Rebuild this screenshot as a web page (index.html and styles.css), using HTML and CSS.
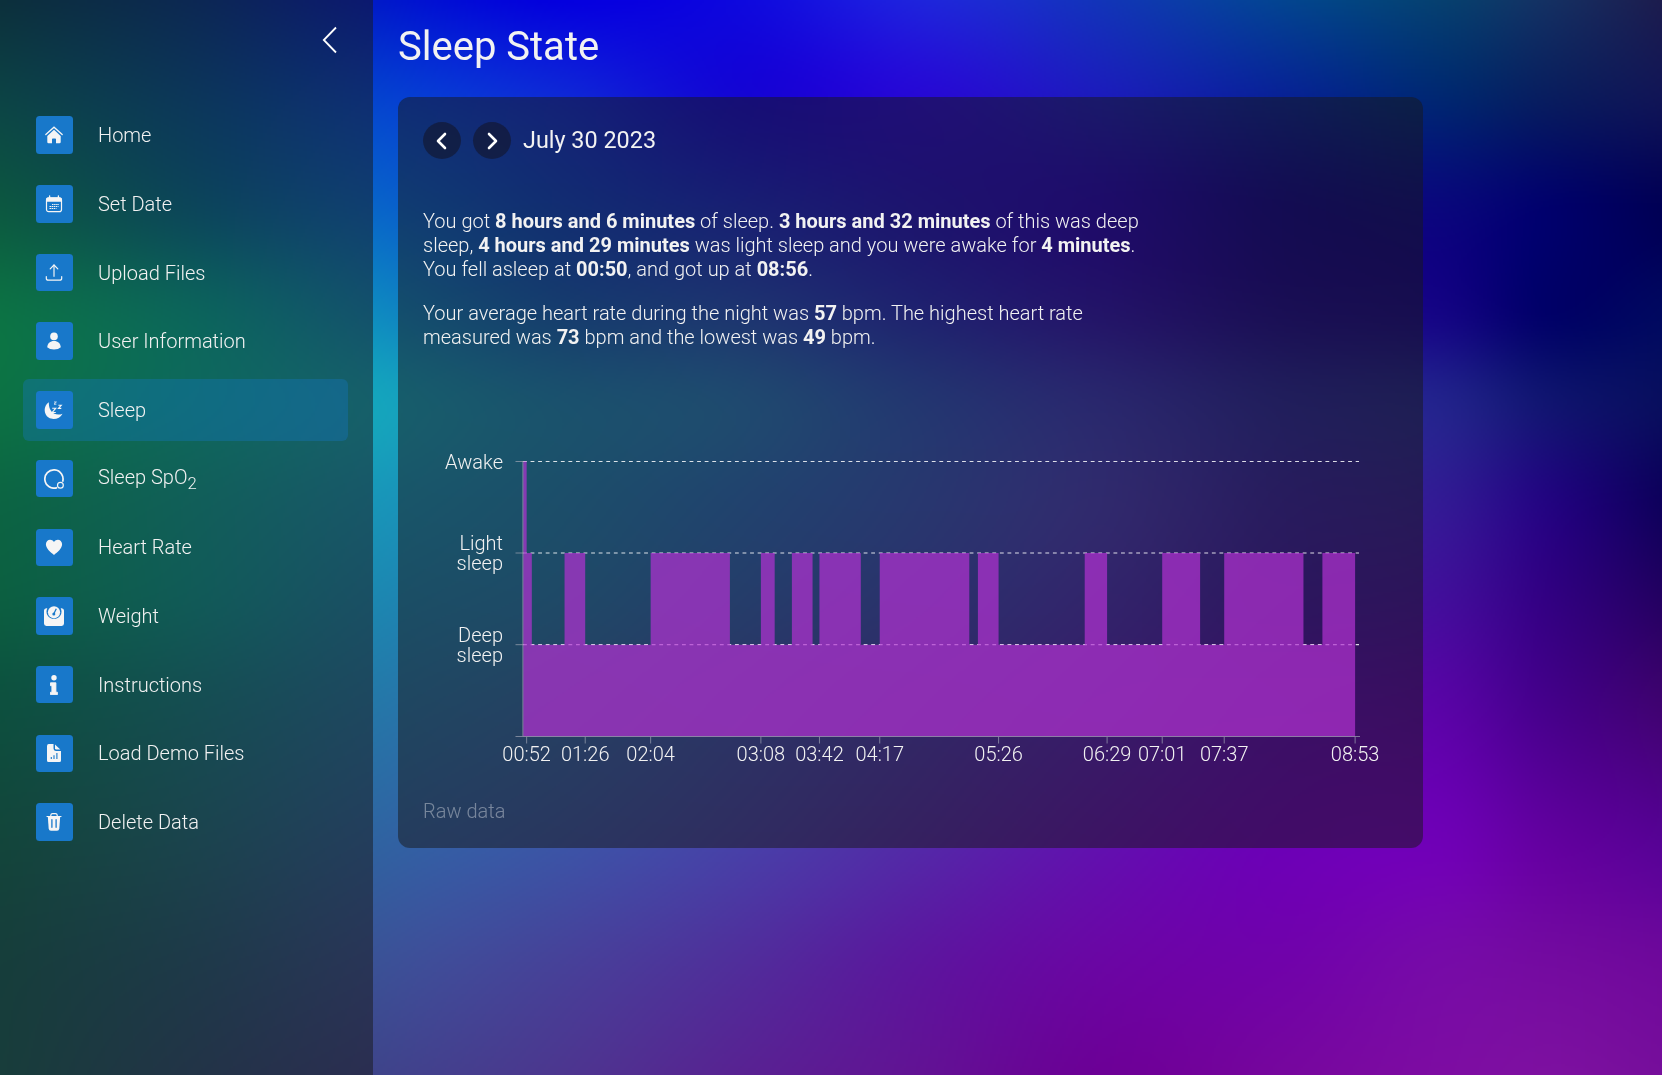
FILE: index.html
```html
<!DOCTYPE html>
<html lang="en">
<head>
<meta charset="utf-8">
<title>Sleep State</title>
<link rel="stylesheet" href="styles.css">
</head>
<body>
<canvas class="backdrop" width="832" height="538"></canvas>
<div class="app">
  <aside class="sidebar">
    <button class="collapse" aria-label="Collapse menu">
      <svg width="16" height="28" viewBox="0 0 16 28"><path d="M14 1.5 1.8 14 14 26.5" fill="none" stroke="#fff" stroke-width="1.8"/></svg>
    </button>
    <nav class="menu">
      <a class="item"><span class="icon"><svg viewBox="0 0 20 20"><path d="M1.8 9.6 10 2.2l8.2 7.4" fill="none" stroke="#f5f5f5" stroke-width="1.3" stroke-linecap="round"/><path d="M10 4.8 3.3 10.9V17q0 1.2 1.2 1.2H8v-4q0-.8.8-.8h2.4q.8 0 .8.8v4h3.500q1.200 0 1.200-1.200v-6.100z"/></svg></span><span>Home</span></a>
      <a class="item"><span class="icon"><svg viewBox="0 0 20 20"><path d="M5.600 1.800v3M14.400 1.800v3" stroke="#f5f5f5" stroke-width="1.300" stroke-linecap="round"/><rect x="2.500" y="3.900" width="15" height="13.700" rx="2.200" fill="none" stroke="#f5f5f5" stroke-width="1.200"/><path d="M2 7.800V6q0-2.400 2.400-2.400h11.200Q18 3.600 18 6v1.800z"/><path d="M8 10.500h7M5.500 12.500h9M5.500 14.500h7" stroke="#f5f5f5" stroke-width="1" stroke-dasharray="1.500 .6" fill="none"/></svg></span><span>Set Date</span></a>
      <a class="item"><span class="icon"><svg viewBox="0 0 20 20"><g fill="none" stroke="#f5f5f5" stroke-linecap="round" stroke-linejoin="round"><path d="M10 13.300V2.200" stroke-width="1.400" opacity=".85"/><path d="M6.200 5.800 10 2l3.800 3.800M2.300 13.500v1.700q0 2 2 2h11.400q2 0 2-2v-1.700" stroke-width="1.200"/></g></svg></span><span>Upload Files</span></a>
      <a class="item"><span class="icon"><svg viewBox="0 0 20 20"><circle cx="10" cy="5.400" r="3.800"/><path d="M3.200 16.300C3.500 12.300 6 10 10 10s6.500 2.300 6.800 6.300Q14.500 18.600 10 18.600T3.200 16.300z"/></svg></span><span>User Information</span></a>
      <a class="item active"><span class="icon"><svg viewBox="0 0 20 20"><path d="M4.900 2.200C-1 6-.4 14.500 4.600 17.600c4.800 3 11.500 1 13.900-3.900C10.500 16.800 4.200 10.800 4.900 2.200z"/><path d="M8.200 8.200h3.600l-3.600 4.300h3.600M14.400 5.200h2.900l-2.900 3.200h2.900" fill="none" stroke="#f5f5f5" stroke-width="1.100"/><path d="M10 2h2.400l-2.400 2.200h2.400" fill="none" stroke="#f5f5f5" stroke-width=".8"/></svg></span><span>Sleep</span></a>
      <a class="item"><span class="icon"><svg viewBox="0 0 20 20"><g fill="none" stroke="#f5f5f5" stroke-width="1.700"><path d="M18.600 12.800A9.100 9.100 0 1 0 13 18.600"/><circle cx="16.400" cy="16.200" r="2.900" stroke-width="1.200"/></g></svg></span><span class="raised">Sleep SpO<sub>2</sub></span></a>
      <a class="item"><span class="icon"><svg viewBox="0 0 20 20"><path d="M10 18C6.500 15 1.900 11.700 1.900 7.300 1.900 2.200 7.700 1.100 10 5c2.300-3.900 8.100-2.800 8.100 2.300C18.100 11.700 13.500 15 10 18z"/></svg></span><span>Heart Rate</span></a>
      <a class="item"><span class="icon"><svg viewBox="0 0 20 20"><path d="M2.300 2.200h1A7.500 7.500 0 1 0 16.700 2.200h1Q20 2.400 20 4.400v13.200Q20 20 17.600 20H2.400Q0 20 0 17.600V4.400Q0 2.400 2.300 2.200z"/><circle cx="10" cy="6.300" r="6.100"/><path d="M12.300 2.800 10.200 7" stroke="#1878ca" stroke-width="1.300"/><circle cx="9.800" cy="8" r="1.500" fill="#1878ca"/></svg></span><span>Weight</span></a>
      <a class="item"><span class="icon"><svg viewBox="0 0 20 20"><circle cx="10" cy="2.700" r="2.700"/><path d="M6.500 7.800h5.400v9.400h1.500v2.500H6.500v-2.500h1.400v-6.500H6.500z" stroke="#f5f5f5" stroke-width=".9" stroke-linejoin="round"/></svg></span><span>Instructions</span></a>
      <a class="item"><span class="icon"><svg viewBox="0 0 20 20"><path d="M4.800 1.100H9.500v4.500q0 2.300 2.300 2.300H17v9.500q0 1.500-1.500 1.500h-11Q3 18.900 3 17.400V2.900q0-1.800 1.800-1.800z"/><path d="M11 1.400 16.300 6.600H12.400Q11 6.600 11 5.200z"/><path d="M7.300 14v2M10 12.200V16M12.900 10v6" stroke="#1878ca" stroke-width="1.100"/></svg></span><span>Load Demo Files</span></a>
      <a class="item"><span class="icon"><svg viewBox="0 0 20 20"><path d="M6.800 4V3.200Q7 1.700 8.500 1.700h3Q13 1.700 13.200 3.200V4M3 4.500h14" fill="none" stroke="#f5f5f5" stroke-width="1.200" stroke-linecap="round"/><path d="M3.800 4.500h12.400l-.9 12q-.2 2.200-2.300 2.200H7q-2.100 0-2.300-2.200z"/><path d="M7.900 7.700v7.600M12.100 7.700v7.600" stroke="#1878ca" stroke-width="1.300" stroke-linecap="round"/></svg></span><span>Delete Data</span></a>
    </nav>
  </aside>
  <main class="content">
    <h1 class="title">Sleep State</h1>
    <section class="card">
      <header class="date-bar">
        <button class="round" aria-label="Previous day"><svg width="12" height="18" viewBox="0 0 12 18"><path d="M9 2 2 9l7 7"/></svg></button>
        <button class="round" aria-label="Next day"><svg width="12" height="18" viewBox="0 0 12 18"><path d="m3 2 7 7-7 7"/></svg></button>
        <h2 class="date">July 30 2023</h2>
      </header>
      <div class="summary">
        <p>You got <b>8 hours and 6 minutes</b> of sleep. <b>3 hours and 32 minutes</b> of this was deep<br>sleep, <b>4 hours and 29 minutes</b> was light sleep and you were awake for <b>4 minutes</b>.<br>You fell asleep at <b>00:50</b>, and got up at <b>08:56</b>.</p>
        <p>Your average heart rate during the night was <b>57</b> bpm. The highest heart rate<br>measured was <b>73</b> bpm and the lowest was <b>49</b> bpm.</p>
      </div>
      <svg class="chart" width="975" height="341" viewBox="0 0 975 341">
        <g class="grid"><path d="M100 24.500H936M100 116H936M100 207.700H936"/></g>
        <path class="area"/>
        <path class="axis" d="M92.500 24.500h7.500M92.500 116h7.500M92.500 207.700h7.500M92.500 299.500H937M99.900 24v275"/>
        <g class="ylabels"><text x="80" y="32">Awake</text><text x="80" y="113">Light</text><text x="80" y="133">sleep</text><text x="80" y="205">Deep</text><text x="80" y="225">sleep</text></g>
        <g class="xlabels"></g>
      </svg>
      <a class="raw">Raw data</a>
    </section>
  </main>
</div>
<script src="script.js"></script>
</body>
</html>
```
FILE: styles.css
```css
* { box-sizing: border-box; }
body {
  margin: 0;
  height: 100vh;
  overflow: hidden;
  background: #0a1470;
  color: #f2f2f2;
  font: 300 20px/24px Roboto, sans-serif;
}
button { border: 0; padding: 0; background: none; }
.backdrop { position: fixed; inset: 0; width: 100%; height: 100%; z-index: -1; }
.app { display: flex; height: 100vh; }
.sidebar {
  width: 373px;
  flex: none;
  padding: 26px 25px 0 23px;
  background: rgba(23, 23, 24, .5);
}
.collapse { display: block; width: 16px; height: 28px; margin: 0 10px 50.300px auto; }
.collapse svg { display: block; }
.menu { display: flex; flex-direction: column; gap: 7px; }
.item {
  display: flex;
  flex: none;
  align-items: center;
  gap: 25px;
  height: 61.690px;
  padding-left: 13px;
  border-radius: 6px;
}
.item.active { background: rgba(24, 120, 202, .34); }
.icon {
  display: grid;
  place-items: center start;
  width: 37px;
  height: 37.500px;
  padding-left: 8px;
  border-radius: 3.500px;
  background: #1878ca;
}
.icon svg { width: 20px; height: 20px; fill: #f5f5f5; }
.raised { padding-bottom: 3px; }
sub { font-size: 16.700px; line-height: 0; }
.content { flex: 1; padding: 23px 25px; }
.title { margin: 0; font-size: 40px; line-height: 48px; font-weight: 400; }
.card {
  width: 1025px;
  height: 751px;
  margin-top: 26px;
  padding: 25px;
  border-radius: 12px;
  background: rgba(23, 23, 24, .5);
}
.date-bar { display: flex; align-items: center; gap: 12px; height: 37px; }
.round {
  display: grid;
  place-items: center;
  width: 38px;
  height: 37px;
  border-radius: 50%;
  background: rgba(20, 22, 42, .6);
}
.round svg { fill: none; stroke: #fff; stroke-width: 2.600; stroke-linecap: round; stroke-linejoin: round; }
.date { margin: 0; padding-bottom: 2px; font-size: 23.400px; font-weight: 400; }
.summary { margin-top: 50px; }
.summary p { margin: 0 0 20px; }
.summary b { font-weight: 700; }
.chart { display: block; margin-top: 88px; overflow: visible; }
.grid path { stroke: rgba(255, 255, 255, .85); stroke-width: 1.200; stroke-dasharray: 3.830 3.740; }
.axis { fill: none; stroke: rgba(160, 165, 180, .7); }
.area { fill: rgba(176, 50, 208, .72); }
.chart text { fill: #f2f2f2; font-size: 20px; }
.ylabels { text-anchor: end; }
.xlabels { text-anchor: middle; }
.raw { display: block; margin-top: 21px; color: rgba(255, 255, 255, .38); }
```
FILE: script.js
```js
// Mesh gradient behind the page: colours at the crossings of the xs and ys lines.
const xs = [0, 190, 373, 560, 740, 920, 1100, 1280, 1440, 1550, 1662];
const ys = [0, 100, 210, 310, 400, 500, 600, 700, 850, 960, 1075];
const mesh = [
  [[0,72,96],[0,56,142],[0,26,200],[4,0,222],[14,8,222],[30,36,220],[18,52,185],[3,68,145],[6,64,112],[20,48,98],[28,28,78]],
  [[0,112,114],[0,86,156],[4,68,206],[14,42,214],[20,6,212],[38,8,212],[28,26,188],[8,32,150],[0,38,114],[8,28,95],[16,20,86]],
  [[0,154,106],[0,118,156],[8,102,200],[12,68,203],[24,40,205],[34,16,196],[36,0,186],[16,0,142],[10,6,125],[0,0,108],[0,0,85]],
  [[0,204,112],[0,176,158],[14,138,192],[20,98,196],[34,80,200],[38,44,198],[46,16,184],[28,6,146],[20,4,132],[0,0,104],[0,8,95]],
  [[0,204,112],[4,184,160],[20,165,188],[28,138,194],[38,122,198],[46,84,200],[58,54,194],[42,36,160],[34,34,140],[16,20,112],[8,14,94]],
  [[0,178,110],[10,166,154],[24,150,184],[32,132,188],[42,110,196],[56,86,198],[72,60,194],[56,32,164],[50,26,148],[34,4,128],[14,0,92]],
  [[0,166,106],[10,156,150],[28,135,176],[38,122,182],[50,98,188],[62,74,192],[76,48,190],[66,22,166],[66,14,155],[50,0,130],[36,0,98]],
  [[2,138,102],[18,132,140],[36,120,168],[50,106,174],[62,82,180],[74,58,182],[86,34,186],[90,10,178],[88,4,166],[68,0,138],[62,2,112]],
  [[14,114,94],[30,110,130],[48,98,160],[60,84,166],[72,64,168],[84,40,168],[98,16,175],[108,0,182],[112,0,182],[100,0,160],[88,2,150]],
  [[20,100,94],[36,92,122],[58,82,150],[70,66,153],[80,46,155],[92,22,158],[106,6,164],[112,2,170],[118,10,168],[115,10,160],[110,8,155]],
  [[24,98,94],[44,80,118],[62,68,138],[76,54,143],[88,34,146],[98,18,148],[108,0,150],[118,6,157],[125,12,162],[125,16,160],[118,14,155]]
];

// Cubic Hermite weights for the four knots around v.
function weights(knots, v) {
  const n = knots.length;
  let i = 0;
  while (i < n - 2 && v > knots[i + 1]) i++;
  const t = (v - knots[i]) / (knots[i + 1] - knots[i]);
  const h = knots[i + 1] - knots[i];
  const a = Math.max(i - 1, 0), d = Math.min(i + 2, n - 1);
  const m0 = h / (knots[i + 1] - knots[a]), m1 = h / (knots[d] - knots[i]);
  const t2 = t * t, t3 = t2 * t;
  const h10 = t3 - 2 * t2 + t, h11 = t3 - t2;
  return [[a, -h10 * m0], [i, 2 * t3 - 3 * t2 + 1 - h11 * m1], [i + 1, 3 * t2 - 2 * t3 + h10 * m0], [d, h11 * m1]];
}

const canvas = document.querySelector('.backdrop');
const ctx = canvas.getContext('2d');
const W = canvas.width, H = canvas.height;
const img = ctx.createImageData(W, H);
const wx = [];
for (let x = 0; x < W; x++) wx.push(weights(xs, x / (W - 1) * 1662));
for (let y = 0; y < H; y++) {
  const wy = weights(ys, y / (H - 1) * 1075);
  const row = xs.map((_, c) => [0, 1, 2].map(k => wy.reduce((s, [r, w]) => s + w * mesh[r][c][k], 0)));
  for (let x = 0; x < W; x++) {
    const o = (y * W + x) * 4;
    for (let k = 0; k < 3; k++) {
      let s = 0;
      for (const [c, w] of wx[x]) s += w * row[c][k];
      img.data[o + k] = s;
    }
    img.data[o + 3] = 255;
  }
}
ctx.putImageData(img, 0, 0);

// Sleep stages: [minutes after 00:50, level], level 3 awake, 2 light, 1 deep.
const stages = [[0,3],[2,2],[5,1],[24,2],[36,1],[74,2],[120,1],[138,2],[146,1],[156,2],[168,1],[172,2],[196,1],[207,2],[259,1],[264,2],[276,1],[326,2],[339,1],[371,2],[393,1],[407,2],[453,1],[464,2]];
const px = m => 100.2 + m * 1.7224;
const py = l => 299.5 - l * 91.7;
let d = 'M' + px(0) + ' 299.5';
stages.forEach(([m, l]) => { d += 'H' + px(m) + 'V' + py(l); });
document.querySelector('.area').setAttribute('d', d + 'H' + px(483) + 'V299.5z');

const ticks = [[2,'00:52'],[36,'01:26'],[74,'02:04'],[138,'03:08'],[172,'03:42'],[207,'04:17'],[276,'05:26'],[339,'06:29'],[371,'07:01'],[407,'07:37'],[483,'08:53']];
document.querySelector('.xlabels').innerHTML = ticks.map(([m, t]) =>
  `<path class="axis" d="M${px(m)} 300v6.500"/><text x="${px(m)}" y="324">${t}</text>`).join('');
```
